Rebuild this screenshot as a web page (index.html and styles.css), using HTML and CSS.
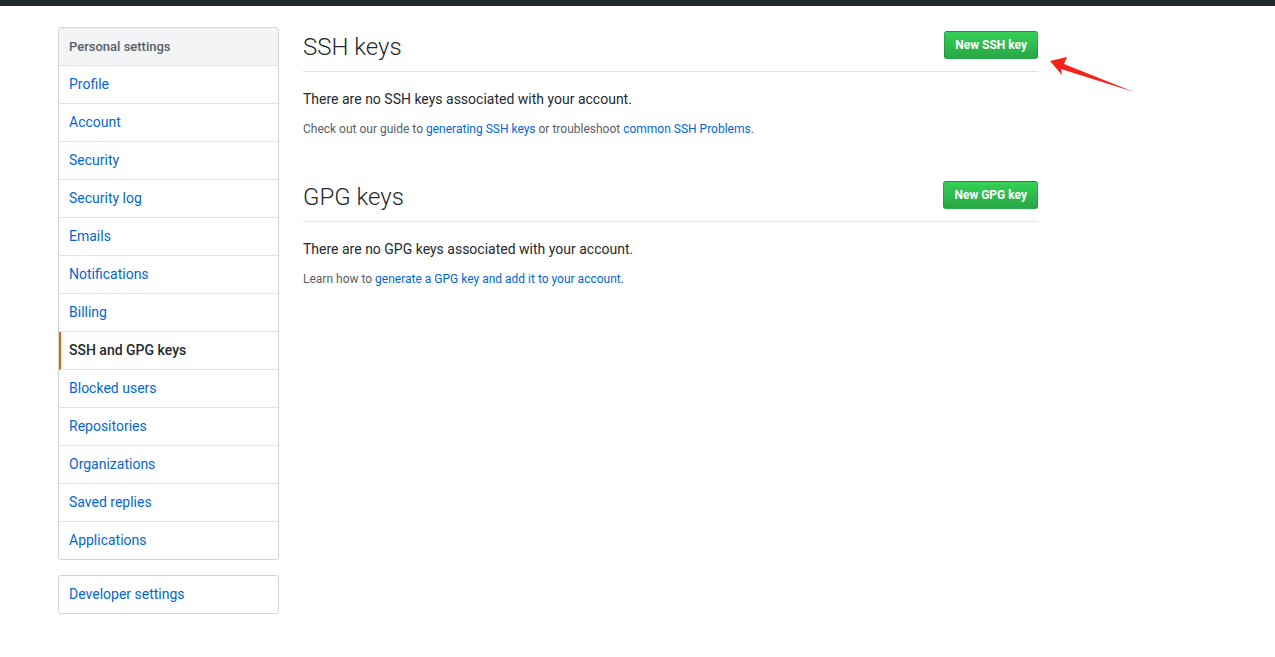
FILE: index.html
```html
<!DOCTYPE html>
<html lang="en">
<head>
<meta charset="utf-8">
<title>SSH and GPG keys</title>
<link rel="stylesheet" href="styles.css">
</head>
<body>
<div class="topbar"></div>
<div class="page">
  <div class="sidebar">
    <nav class="menu">
      <div class="menu-heading">Personal settings</div>
      <a class="menu-item" href="#">Profile</a>
      <a class="menu-item" href="#">Account</a>
      <a class="menu-item" href="#">Security</a>
      <a class="menu-item" href="#">Security log</a>
      <a class="menu-item" href="#">Emails</a>
      <a class="menu-item" href="#">Notifications</a>
      <a class="menu-item" href="#">Billing</a>
      <a class="menu-item selected" href="#">SSH and GPG keys</a>
      <a class="menu-item" href="#">Blocked users</a>
      <a class="menu-item" href="#">Repositories</a>
      <a class="menu-item" href="#">Organizations</a>
      <a class="menu-item" href="#">Saved replies</a>
      <a class="menu-item" href="#">Applications</a>
    </nav>
    <nav class="menu">
      <a class="menu-item" href="#">Developer settings</a>
    </nav>
  </div>
  <div class="main">
    <div class="section">
      <div class="subhead">
        <h2>SSH keys</h2>
        <a class="btn" href="#">New SSH key</a>
      </div>
      <p class="blank">There are no SSH keys associated with your account.</p>
      <p class="note">Check out our guide to <a href="#">generating SSH keys</a> or troubleshoot <a href="#">common SSH Problems</a>.</p>
    </div>
    <div class="section">
      <div class="subhead">
        <h2>GPG keys</h2>
        <a class="btn" href="#">New GPG key</a>
      </div>
      <p class="blank">There are no GPG keys associated with your account.</p>
      <p class="note">Learn how to <a href="#">generate a GPG key and add it to your account</a>.</p>
    </div>
  </div>
</div>
<svg class="arrow" width="100" height="50" viewBox="0 0 100 50">
  <polygon points="10,11 27,7 24,14 94,42 21,19 22,25" fill="#f5221b"/>
</svg>
</body>
</html>
```

FILE: styles.css
```css
body{margin:0;font-family:Roboto,"Noto Sans",Arial,sans-serif;font-size:14px;line-height:1.5;color:#24292e;background:#fff;}
a{color:#0366d6;text-decoration:none;}
p{margin:0;}
.topbar{height:6px;background:#24292e;}
.page{display:flex;gap:24px;padding:21px 0 0 58px;width:980px;}
.sidebar{width:221px;flex-shrink:0;display:flex;flex-direction:column;gap:15px;}
.menu{border:1px solid #d1d5da;border-radius:3px;overflow:hidden;}
.menu-heading{padding:8px 10px;background:#f3f4f6;color:#586069;font-size:13px;font-weight:500;line-height:21px;border-bottom:1px solid #e1e4e8;}
.menu-item{display:block;padding:8px 10px;line-height:21px;border-bottom:1px solid #e1e4e8;}
.menu-item:last-child{border-bottom:0;}
.menu-item.selected{color:#24292e;font-weight:500;border-left:2px solid #e36209;padding-left:8px;}
.main{flex:1;}
.section + .section{margin-top:39px;}
.subhead{display:flex;justify-content:space-between;align-items:center;padding-bottom:8px;border-bottom:1px solid #e1e4e8;}
.subhead h2{margin:0;padding-top:4px;font-size:24px;font-weight:300;line-height:32px;}
.btn{display:block;padding:3px 10px;font-size:12px;font-weight:700;line-height:20px;color:#fff;background:linear-gradient(#34d058,#28a745);border:1px solid rgba(27,31,35,.2);border-radius:3px;}
.blank{margin-top:17px;}
.note{margin-top:10px;font-size:12px;line-height:18px;color:#586069;}
.arrow{position:absolute;left:1040px;top:50px;}
```
